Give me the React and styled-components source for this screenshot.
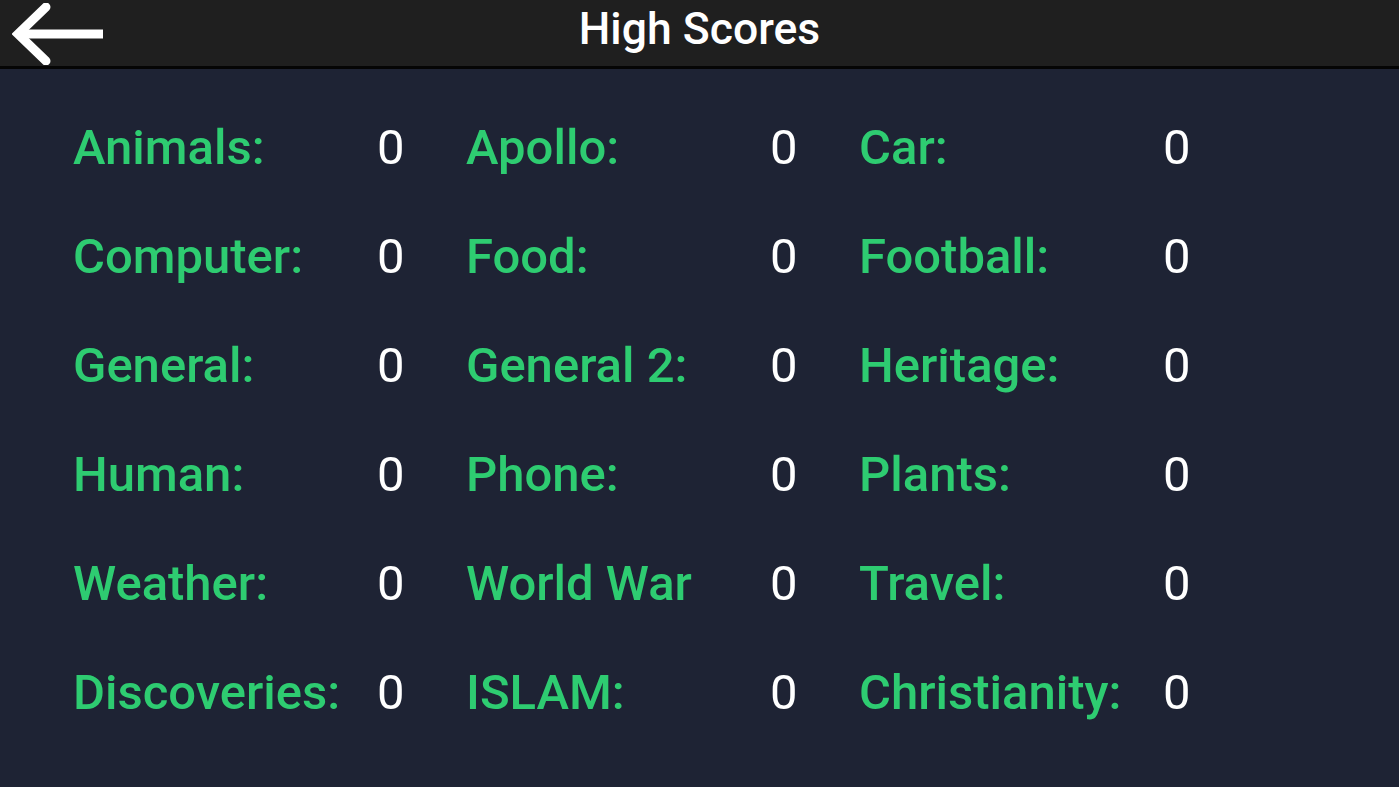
import styled, { createGlobalStyle } from "styled-components";

const GlobalStyle = createGlobalStyle`
  html, body {
    margin: 0;
    padding: 0;
    background: #1e2334;
    font-family: Roboto, "Liberation Sans", sans-serif;
  }
  #root {
    min-height: 100vh;
  }
`;

const scores = [
  ["Animals:", 0],
  ["Apollo:", 0],
  ["Car:", 0],
  ["Computer:", 0],
  ["Food:", 0],
  ["Football:", 0],
  ["General:", 0],
  ["General 2:", 0],
  ["Heritage:", 0],
  ["Human:", 0],
  ["Phone:", 0],
  ["Plants:", 0],
  ["Weather:", 0],
  ["World War", 0],
  ["Travel:", 0],
  ["Discoveries:", 0],
  ["ISLAM:", 0],
  ["Christianity:", 0],
];

function BackArrow() {
  return (
    <svg width="92" height="62" viewBox="0 0 92 62">
      <g stroke="#ffffff" strokeWidth="9" fill="none" strokeLinejoin="miter">
        <path d="M34 4 L6 31 L34 58" strokeLinecap="round" />
        <path d="M8 31 L91 31" strokeLinecap="butt" />
      </g>
    </svg>
  );
}

export default function App() {
  return (
    <Page>
      <GlobalStyle />
      <Header>
        <BackButton aria-label="back">
          <BackArrow />
        </BackButton>
        <Title>High Scores</Title>
      </Header>
      <ScoreGrid>
        {scores.map(([name, value]) => (
          <ScoreCell key={name}>
            <Label>{name}</Label>
            <Value>{value}</Value>
          </ScoreCell>
        ))}
      </ScoreGrid>
    </Page>
  );
}

const Page = styled.div`
  min-height: 100vh;
  display: flex;
  flex-direction: column;
  background: #1e2334;
`;

const Header = styled.header`
  height: 66px;
  border-bottom: 3px solid #050505;
  background: #1f1f1f;
  display: flex;
  align-items: center;
  justify-content: center;
  position: relative;
`;

const BackButton = styled.button`
  position: absolute;
  left: 12px;
  top: 3px;
  padding: 0;
  border: none;
  background: none;
  display: flex;
  cursor: pointer;
`;

const Title = styled.h1`
  margin: 0 0 8px;
  color: #ffffff;
  font-size: 44.5px;
  font-weight: 500;
  line-height: 52px;
`;

const ScoreGrid = styled.main`
  display: grid;
  grid-template-columns: repeat(3, 393px);
  grid-auto-rows: 109px;
  padding: 24px 0 0 73px;
`;

const ScoreCell = styled.div`
  display: flex;
  align-items: center;
`;

const Label = styled.span`
  width: 304px;
  color: #2ecc71;
  font-size: 49px;
  font-weight: 500;
  white-space: nowrap;
`;

const Value = styled.span`
  color: #ffffff;
  font-size: 49px;
  font-weight: 400;
`;
